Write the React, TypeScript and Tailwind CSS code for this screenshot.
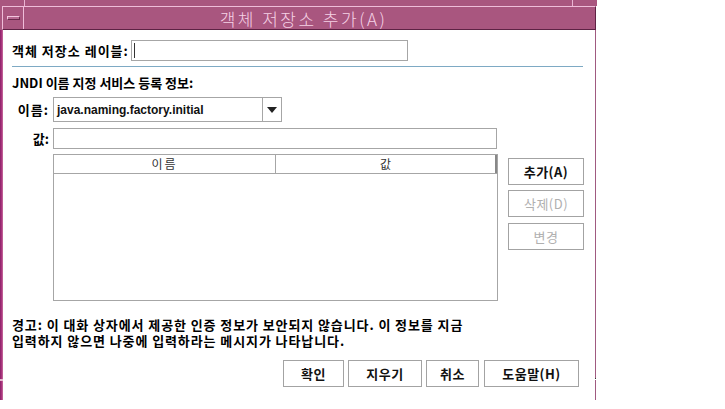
import React from "react";

function Btn({ w, children, disabled }: { w: string; children: React.ReactNode; disabled?: boolean }) {
  return (
    <div
      className={`${w} h-[27px] border border-[#a3a3a3] bg-white flex items-center justify-center text-[13px] tracking-[0.5px] font-bold ${
        disabled ? "text-[#b0b0b0] font-normal" : "text-[#111]"
      }`}
    >
      {children}
    </div>
  );
}

export default function App() {
  return (
    <div className="w-[725px] h-[409px] bg-white text-black font-['Noto_Sans_CJK_KR','Noto_Sans',sans-serif]">
      <div className="w-[597px] h-[400px] flex flex-col">
        {/* top frame strip */}
        <div className="h-[6px] flex bg-[#a9567f]">
          <div className="w-[24px]" />
          <div className="w-px bg-[#e9b4d2]" />
          <div className="flex-1" />
          <div className="w-px bg-[#e9b4d2]" />
          <div className="w-[24px]" />
        </div>
        {/* title bar */}
        <div className="h-[24px] flex bg-[#a9567f]">
          <div className="w-[2px] bg-[#a9567f]" />
          <div className="flex-1 flex border-t border-l border-[#efbdd9] border-b-[#5e2244] border-r-[#5e2244] border-b border-r">
            <div className="w-[21px] flex items-center justify-center border-r border-[#efbdd9]">
              <div className="w-[13px] h-[4px] border border-[#f2c6de] border-b-[#6a2a4c] border-r-[#6a2a4c] bg-[#b66890]" />
            </div>
            <div className="flex-1 flex items-center justify-center pr-[12px] text-[17px] leading-none font-light tracking-[2.5px] text-[#f6d2e6]">
              객체 저장소 추가(A)
            </div>
          </div>
          <div className="w-px bg-white" />
        </div>
        {/* body */}
        <div className="flex-1 flex">
          <div className="w-[3px] flex flex-col">
            <div className="h-[349px] bg-linear-to-r from-[#8a2066] via-[#a8347e] to-[#c8709e]" />
            <div className="h-[2px] bg-[#e6b8cf]" />
            <div className="flex-1 bg-linear-to-r from-[#8a2066] via-[#a8347e] to-[#c8709e]" />
          </div>
          <div className="w-[592px] bg-white pl-[9px] flex flex-col">
            {/* row 1 */}
            <div className="mt-[10px] flex items-center h-[21px]">
              <div className="w-[119px] text-[13px] font-bold tracking-[1px] whitespace-nowrap leading-none">객체 저장소 레이블:</div>
              <div className="w-[277px] h-[21px] border border-[#a6a6a6] flex items-center pl-[2px]">
                <div className="w-px h-[15px] bg-[#333]" />
              </div>
            </div>
            {/* separator */}
            <div className="mt-[5px] h-px w-[571px] bg-[#7eaac4]" />
            {/* JNDI */}
            <div className="mt-[7px] h-[17px] leading-[17px] text-[13px] font-bold whitespace-nowrap">
              JNDI 이름 지정 서비스 등록 정보:
            </div>
            {/* name combo */}
            <div className="mt-[6px] flex items-center h-[25px]">
              <div className="w-[41px] text-right pr-[4px] text-[13px] font-bold tracking-[1px] leading-none whitespace-nowrap">이름:</div>
              <div className="w-[229px] h-[25px] border border-[#a6a6a6] flex">
                <div className="flex-1 flex items-center pl-[3px] text-[12px] font-bold text-[#111] font-['Liberation_Sans',sans-serif]">
                  java.naming.factory.initial
                </div>
                <div className="w-[19px] border-l border-[#a6a6a6] flex items-center justify-center">
                  <svg width="10" height="6" viewBox="0 0 10 6">
                    <polygon points="0,0 10,0 5,6" fill="#222" />
                  </svg>
                </div>
              </div>
            </div>
            {/* value */}
            <div className="mt-[6px] flex items-center h-[21px]">
              <div className="w-[41px] text-right pr-[4px] text-[13px] font-bold leading-none">값:</div>
              <div className="w-[444px] h-[21px] border border-[#a6a6a6]" />
            </div>
            {/* table + buttons */}
            <div className="mt-[5px] flex h-[147px]">
              <div className="w-[41px]" />
              <div className="w-[445px] h-[147px] border border-[#a6a6a6] flex flex-col">
                <div className="h-[19px] flex border-b border-[#a6a6a6]">
                  <div className="w-[222px] border-r border-[#a6a6a6] flex items-center justify-center text-[12px] tracking-[2px] text-[#333] leading-none">
                    이름
                  </div>
                  <div className="flex-1 border-r-2 border-[#888] flex items-center justify-center text-[12px] text-[#333] leading-none">
                    값
                  </div>
                </div>
                <div className="flex-1" />
              </div>
              <div className="ml-[10px] pt-[4px] flex flex-col">
                <Btn w="w-[76px]">추가(A)</Btn>
                <div className="h-[5px]" />
                <Btn w="w-[76px]" disabled>삭제(D)</Btn>
                <div className="h-[6px]" />
                <Btn w="w-[76px]" disabled>변경</Btn>
              </div>
            </div>
            {/* warning */}
            <div className="mt-[16px] text-[13px] font-bold tracking-[0.9px] leading-[16px] whitespace-nowrap">
              <div className="h-[16px]">경고: 이 대화 상자에서 제공한 인증 정보가 보안되지 않습니다. 이 정보를 지금</div>
              <div className="h-[16px]">입력하지 않으면 나중에 입력하라는 메시지가 나타납니다.</div>
            </div>
            {/* bottom buttons */}
            <div className="mt-[11px] flex justify-end pr-[16px]">
              <Btn w="w-[61px]">확인</Btn>
              <div className="w-[4px]" />
              <Btn w="w-[74px]">지우기</Btn>
              <div className="w-[4px]" />
              <Btn w="w-[53px]">취소</Btn>
              <div className="w-[5px]" />
              <Btn w="w-[95px]">도움말(H)</Btn>
            </div>
          </div>
          <div className="w-px flex flex-col">
            <div className="h-[348px] bg-[#a05a80]" />
            <div className="h-px bg-[#333]" />
            <div className="h-px bg-white" />
            <div className="flex-1 bg-[#a05a80]" />
          </div>
          <div className="w-px bg-white" />
        </div>
      </div>
    </div>
  );
}
